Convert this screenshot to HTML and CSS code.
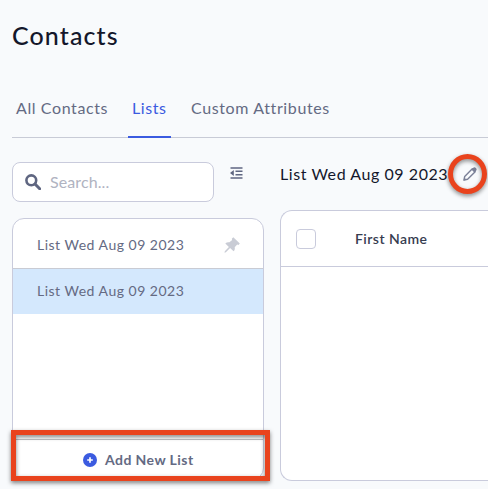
FILE: index.html
```html
<!DOCTYPE html>
<html lang="en">
<head>
<meta charset="utf-8">
<title>Contacts</title>
<link rel="stylesheet" href="styles.css">
</head>
<body>
<h1 class="title"><span>Contacts</span></h1>
<nav class="tabs">
  <a class="tab tab-all"><span>All Contacts</span></a>
  <a class="tab tab-lists active"><span>Lists</span></a>
  <a class="tab tab-custom"><span>Custom Attributes</span></a>
</nav>
<main class="content">
  <aside class="sidebar">
    <div class="tools">
      <div class="search">
        <svg class="search-icon" viewBox="0 0 16 16"><circle cx="6.3" cy="6.3" r="4.9" fill="none" stroke="currentColor" stroke-width="2.6"/><path d="M10 10l4.7 4.7" stroke="currentColor" stroke-width="3" stroke-linecap="round"/></svg>
        <span class="placeholder">Search...</span>
      </div>
      <svg class="collapse" viewBox="0 0 13 12"><path d="M.5 .9h12M5.500 4.300h7M5.500 7.700h7M.5 11.100h12" stroke="currentColor" stroke-width="1.500"/><path d="M0 6l3.800-3v6z" fill="currentColor"/></svg>
    </div>
    <section class="lists">
      <div class="row pinned"><span class="row-name">List Wed Aug 09 2023</span>
        <svg class="pin" viewBox="0 0 16 16"><path d="M9.300.3l6.500 6.200-1.300 1.500-1.300-.5-2.500 2.700c.4 1.500 0 3-1.100 4.100L6.100 11 1.900 15.300.5 15.700.8 14.200 4.900 9.900 1.300 6.400c1.200-1.100 2.700-1.500 4.100-1.100L8.200 2.900 7.800 1.700z" fill="currentColor"/></svg>
      </div>
      <div class="row selected"><span class="row-name">List Wed Aug 09 2023</span></div>
      <div class="add">
        <svg class="plus" viewBox="0 0 14 14"><circle cx="7" cy="7" r="7" fill="#3b5be0"/><path d="M7 4.200v5.600M4.200 7h5.600" stroke="#fff" stroke-width="1.700"/></svg>
        <span class="add-label">Add New List</span>
        <div class="mark-box"></div>
      </div>
    </section>
  </aside>
  <section class="detail">
    <div class="heading"><span class="heading-name">List Wed Aug 09 2023</span>
      <span class="edit">
        <svg class="pencil" viewBox="0 0 14 14"><path d="M1 13l.7-3.600L9.300 1.800l2.900 2.900-7.600 7.600z" fill="none" stroke="currentColor" stroke-width="1.400" stroke-linejoin="round"/><path d="M8.400 2.600L10 1a2 2 0 0 1 2.900 0 2 2 0 0 1 0 2.900l-1.500 1.700zM.6 13.400l.6-3 2.400 2.400z" fill="currentColor"/></svg>
        <span class="mark-ring"></span>
      </span>
    </div>
    <div class="table">
      <div class="thead"><span class="check"></span><span class="col">First Name</span></div>
    </div>
  </section>
</main>
</body>
</html>
```
FILE: styles.css
```css
* { box-sizing: border-box; }
body {
  margin: 0;
  width: 488px;
  height: 489px;
  overflow: hidden;
  background: #f8fafc;
  color: #646a83;
  font-family: Lato, "Liberation Sans", sans-serif;
}
svg { display: block; flex: none; }
span { white-space: nowrap; }
.title {
  margin: 0;
  padding: 19px 0 0 12px;
  height: 94px;
  color: #14172b;
  font-size: 25px;
  font-weight: 500;
  line-height: 32px;
  letter-spacing: 1.1px;
}
.tabs {
  display: flex;
  margin-left: 12px;
  height: 44px;
  border-bottom: 1px solid #c8cbd6;
  font-size: 16px;
  line-height: 28px;
}
.tab { height: 44px; padding-left: 4px; }
.tab-all { width: 116px; letter-spacing: 0.6px; }
.tab-lists { width: 43px; letter-spacing: 0.6px; }
.tab-custom { margin-left: 16px; letter-spacing: 0.62px; }
.active { color: #3b5be0; border-bottom: 2px solid #3b5be0; }
.content { display: flex; gap: 16px; padding-left: 12px; }
.sidebar { width: 252px; flex: none; padding-top: 24px; }
.tools { display: flex; gap: 15px; }
.search {
  display: flex;
  align-items: center;
  width: 202px;
  height: 40px;
  padding-left: 12px;
  border: 1px solid #c9cbdc;
  border-radius: 8px;
  background: #fff;
}
.search-icon { width: 16px; height: 16px; color: #5f6681; }
.placeholder { margin: -2px 0 0 9px; font-size: 16px; letter-spacing: 0.1px; color: #b0b3c1; }
.collapse { width: 13px; height: 12px; margin: 5px 0 0 1px; color: #5f6681; }
.lists {
  display: flex;
  flex-direction: column;
  margin-top: 16px;
  height: 262px;
  border: 1px solid #c9cbdc;
  border-radius: 12px;
  background: #fff;
  font-size: 14px;
}
.row {
  display: flex;
  align-items: center;
  justify-content: space-between;
  height: 45px;
  padding: 0 23px 0 24px;
  letter-spacing: 0.5px;
}
.pinned { height: 50px; padding-top: 2px; border-bottom: 1px solid #c9cbd3; }
.selected { padding-bottom: 2px; background: #d4e8fd; }
.pin { width: 16px; height: 16px; color: #c9ccd5; }
.add {
  position: relative;
  display: flex;
  align-items: center;
  gap: 8px;
  height: 40px;
  margin-top: auto;
  padding-left: 70px;
  border-top: 1px solid #bfc0c4;
  font-weight: 700;
  letter-spacing: 0.43px;
}
.plus { width: 14px; height: 14px; }
.mark-box {
  position: absolute;
  left: -2px;
  top: -10px;
  width: 259px;
  height: 51px;
  border: 5px solid #e9431d;
  filter: drop-shadow(0 2px 2px rgba(0, 0, 0, 0.5));
}
.detail { flex: 1; min-width: 0; }
.heading {
  display: flex;
  align-items: center;
  height: 72px;
  color: #14172b;
  font-size: 16px;
  letter-spacing: 0.56px;
}
.heading-name { width: 183px; margin-top: -2px; }
.edit { position: relative; color: #7b8097; }
.pencil { width: 14px; height: 14px; }
.mark-ring {
  position: absolute;
  left: -15px;
  top: -13px;
  width: 39px;
  height: 40px;
  border: 5px solid #e9431d;
  border-radius: 50%;
  filter: drop-shadow(0 2px 2px rgba(0, 0, 0, 0.45));
}
.table {
  height: 271px;
  border: 1px solid #c9cbdc;
  border-right: 0;
  border-radius: 12px 0 0 12px;
  background: #fff;
}
.thead {
  display: flex;
  align-items: center;
  height: 56px;
  padding: 1px 0 0 15px;
  border-bottom: 1px solid #c9cbdc;
}
.check { width: 20px; height: 20px; border: 1px solid #c9cbdc; border-radius: 4px; }
.col { margin: -2px 0 0 39px; color: #363c50; font-size: 14px; font-weight: 600; letter-spacing: 0.45px; }
```
